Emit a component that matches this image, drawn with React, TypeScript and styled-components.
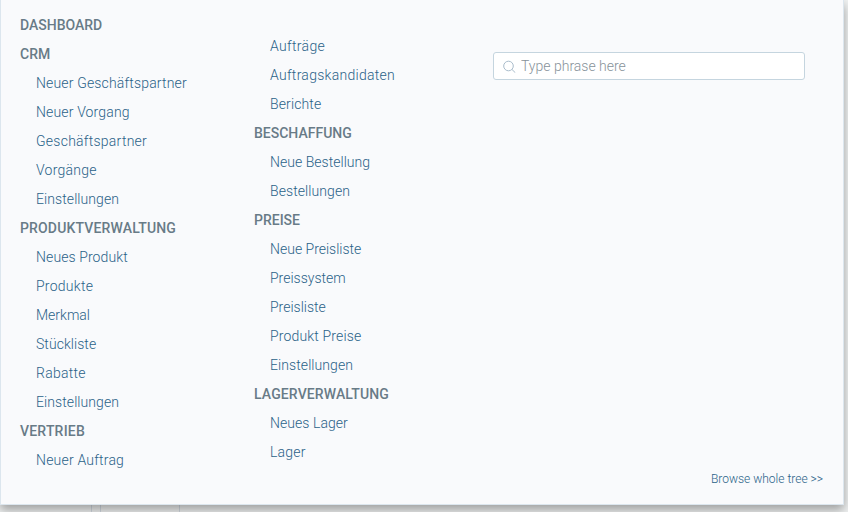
import React from "react";
import styled, { createGlobalStyle } from "styled-components";

const GlobalStyle = createGlobalStyle`
  * { box-sizing: border-box; }
  html, body { margin: 0; height: 512px; overflow: hidden; background: #e9ebec; }
  body { font-family: Roboto, "Liberation Sans", sans-serif; }
`;

const Page = styled.div`
  height: 512px;
  overflow: hidden;
  background:
    linear-gradient(#d3dae2, #d3dae2) 91px 0 / 1px 100% no-repeat,
    linear-gradient(#d3dae2, #d3dae2) 100px 0 / 1px 100% no-repeat,
    linear-gradient(#d3dae2, #d3dae2) 179px 0 / 1px 100% no-repeat,
    #f0f2f2;
`;

const Panel = styled.nav`
  width: 844px;
  height: 505px;
  display: grid;
  grid-template-columns: 234px 239px 312px;
  padding-left: 19px;
  background: #f9fafc;
  border: 1px solid #dce6ee;
  border-top: 0;
  box-shadow: 0 5px 10px 0 rgba(0, 0, 0, 0.35);
`;

const Column = styled.ul<{ $top: number }>`
  list-style: none;
  margin: 0;
  padding: ${(p) => p.$top}px 0 0;
`;

const Entry = styled.li<{ $heading?: boolean; $spacing?: number }>`
  height: 29px;
  line-height: 29px;
  padding-left: ${(p) => (p.$heading ? 0 : 16)}px;
  font-size: 14px;
  font-weight: ${(p) => (p.$heading ? 500 : 300)};
  letter-spacing: ${(p) => p.$spacing ?? 0}px;
  color: ${(p) => (p.$heading ? "#687b87" : "#2a6288")};
  white-space: nowrap;
`;

const Side = styled.div`
  display: flex;
  flex-direction: column;
  justify-content: space-between;
  padding: 52px 0 17px;
`;

const Search = styled.label`
  display: flex;
  align-items: center;
  gap: 5px;
  height: 28px;
  padding-left: 9px;
  background: #fff;
  border: 1px solid #c5d5df;
  border-radius: 3px;
`;

const SearchInput = styled.input`
  flex: 1;
  min-width: 0;
  padding: 0;
  border: 0;
  outline: 0;
  background: none;
  font: 300 14px Roboto, "Liberation Sans", sans-serif;
  &::placeholder { color: #87929a; opacity: 1; }
`;

const BrowseLink = styled.span`
  align-self: flex-end;
  margin-right: -18px;
  font-size: 12px;
  font-weight: 300;
  line-height: 16px;
  color: #2a6288;
  white-space: nowrap;
`;

type Item = { text: string; heading?: boolean; spacing?: number };

const h = (text: string, spacing = 0): Item => ({ text, heading: true, spacing });
const l = (text: string, spacing = 0): Item => ({ text, spacing });

const left: Item[] = [
  h("DASHBOARD"), h("CRM"),
  l("Neuer Geschäftspartner", 0.16), l("Neuer Vorgang", 0.15), l("Geschäftspartner", 0.25),
  l("Vorgänge", 0.25), l("Einstellungen", 0.08),
  h("PRODUKTVERWALTUNG", 0.16),
  l("Neues Produkt", 0.1), l("Produkte", 0.25), l("Merkmal"), l("Stückliste", 0.05),
  l("Rabatte", 0.28), l("Einstellungen", 0.08),
  h("VERTRIEB", 0.2), l("Neuer Auftrag", 0.2),
];

const right: Item[] = [
  l("Aufträge", 0.33), l("Auftragskandidaten", 0.28), l("Berichte", 0.12),
  h("BESCHAFFUNG"), l("Neue Bestellung", 0.03), l("Bestellungen", 0.08),
  h("PREISE"), l("Neue Preisliste"), l("Preissystem"), l("Preisliste"),
  l("Produkt Preise", 0.15), l("Einstellungen", 0.08),
  h("LAGERVERWALTUNG", 0.13), l("Neues Lager", 0.06), l("Lager", 0.2),
];

const MenuColumn = ({ items, top }: { items: Item[]; top: number }) => (
  <Column $top={top}>
    {items.map((it, i) => (
      <Entry key={i} $heading={it.heading} $spacing={it.spacing}>{it.text}</Entry>
    ))}
  </Column>
);

export default function App() {
  return (
    <>
      <GlobalStyle />
      <Page>
        <Panel>
          <MenuColumn items={left} top={11} />
          <MenuColumn items={right} top={32} />
          <Side>
            <Search>
              <svg width="13" height="13" viewBox="0 0 13 13" fill="none" stroke="#a9bccb" strokeWidth="1">
                <circle cx="5.5" cy="6" r="4.8" />
                <path d="M9 9.5l3.3 3.2" />
              </svg>
              <SearchInput placeholder="Type phrase here" />
            </Search>
            <BrowseLink>Browse whole tree &gt;&gt;</BrowseLink>
          </Side>
        </Panel>
      </Page>
    </>
  );
}
